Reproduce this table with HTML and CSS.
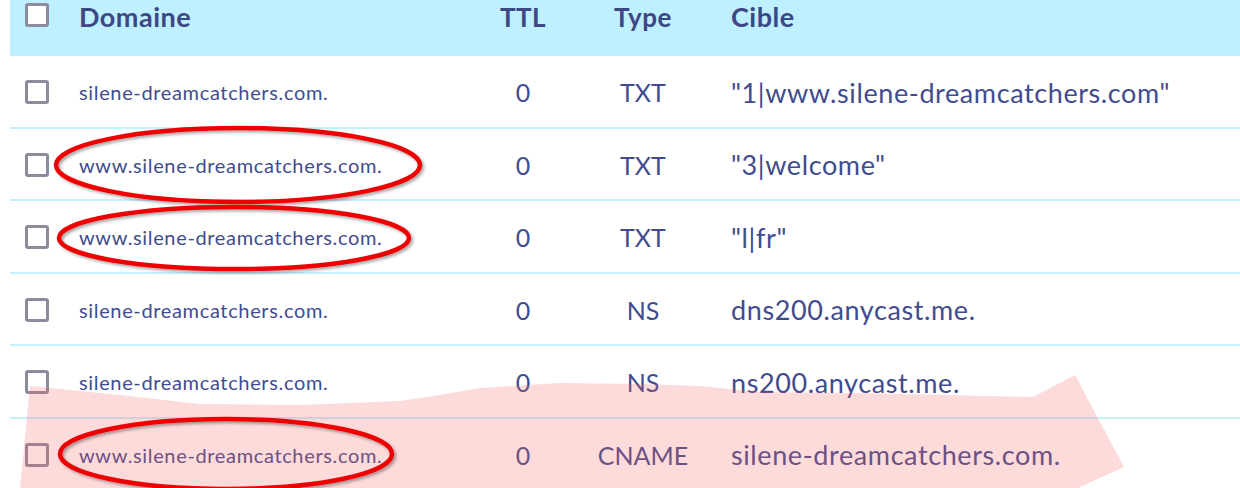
FILE: index.html
```html
<!DOCTYPE html>
<html lang="fr">
<head>
<meta charset="utf-8">
<title>Zone DNS</title>
<link rel="stylesheet" href="styles.css">
</head>
<body>
<div class="table">
  <div class="row head">
    <div class="cell check"><span class="box"></span></div>
    <div class="cell domain">Domaine</div>
    <div class="cell ttl">TTL</div>
    <div class="cell type">Type</div>
    <div class="cell target">Cible</div>
  </div>
  <div class="row">
    <div class="cell check"><span class="box"></span></div>
    <div class="cell domain">silene-dreamcatchers.com.</div>
    <div class="cell ttl">0</div>
    <div class="cell type">TXT</div>
    <div class="cell target">"1|www.silene-dreamcatchers.com"</div>
  </div>
  <div class="row">
    <div class="cell check"><span class="box"></span></div>
    <div class="cell domain">www.silene-dreamcatchers.com.</div>
    <div class="cell ttl">0</div>
    <div class="cell type">TXT</div>
    <div class="cell target">"3|welcome"</div>
  </div>
  <div class="row">
    <div class="cell check"><span class="box"></span></div>
    <div class="cell domain">www.silene-dreamcatchers.com.</div>
    <div class="cell ttl">0</div>
    <div class="cell type">TXT</div>
    <div class="cell target">"l|fr"</div>
  </div>
  <div class="row">
    <div class="cell check"><span class="box"></span></div>
    <div class="cell domain">silene-dreamcatchers.com.</div>
    <div class="cell ttl">0</div>
    <div class="cell type">NS</div>
    <div class="cell target">dns200.anycast.me.</div>
  </div>
  <div class="row">
    <div class="cell check"><span class="box"></span></div>
    <div class="cell domain">silene-dreamcatchers.com.</div>
    <div class="cell ttl">0</div>
    <div class="cell type">NS</div>
    <div class="cell target">ns200.anycast.me.</div>
  </div>
  <div class="row">
    <div class="cell check"><span class="box"></span></div>
    <div class="cell domain">www.silene-dreamcatchers.com.</div>
    <div class="cell ttl">0</div>
    <div class="cell type">CNAME</div>
    <div class="cell target">silene-dreamcatchers.com.</div>
  </div>
</div>
<svg class="annot" width="1240" height="488" viewBox="0 0 1240 488" xmlns="http://www.w3.org/2000/svg">
  <defs>
    <filter id="sh" x="-10%" y="-30%" width="120%" height="160%">
      <feDropShadow dx="2" dy="2" stdDeviation="1.5" flood-color="#000" flood-opacity="0.35"/>
    </filter>
  </defs>
  <polygon class="pink" points="30,386 120,395 200,404 300,405 400,401 440,395 480,388 560,383 640,384 700,386 760,392 860,393 1033,397 1075,375 1124,467 1078,488 20,488"/>
  <ellipse class="ring" cx="238" cy="165" rx="182" ry="37" filter="url(#sh)"/>
  <ellipse class="ring" cx="234" cy="238" rx="175" ry="31" filter="url(#sh)"/>
  <ellipse class="ring" cx="226" cy="454" rx="166" ry="35" filter="url(#sh)"/>
</svg>
</body>
</html>
```
FILE: styles.css
```css
html, body {
  margin: 0;
  padding: 0;
  background: #ffffff;
  width: 1240px;
  height: 488px;
  overflow: hidden;
}

body {
  font-family: "Lato", "Open Sans", sans-serif;
  color: #414c8f;
  position: relative;
}

.table {
  margin-left: 10px;
  width: 1240px;
}

.row {
  display: grid;
  grid-template-columns: 69px 404px 80px 160px 1fr;
  align-items: center;
  height: 72.5px;
  box-sizing: border-box;
  border-bottom: 2px solid #c6f0fd;
  padding-top: 2px;
}

.row.head {
  height: 56px;
  background: #bff0ff;
  border-bottom: none;
  align-items: start;
  padding-top: 3px;
}

.box {
  display: block;
  width: 24px;
  height: 24px;
  box-sizing: border-box;
  border: 3px solid #8c8b9d;
  border-radius: 3px;
  background: #fff;
  margin-left: 15px;
}

.domain {
  font-size: 20px;
  letter-spacing: 0.65px;
  white-space: nowrap;
}

.ttl, .type {
  text-align: center;
  font-size: 25px;
}

.target {
  font-size: 27px;
  letter-spacing: 0.6px;
  padding-left: 8px;
  white-space: nowrap;
}

.head .cell {
  font-weight: 700;
  font-size: 27px;
  letter-spacing: 0.5px;
  line-height: 30px;
  color: #3d4784;
  margin-top: -1px;
}

.head .ttl, .head .type {
  font-size: 26px;
}

.head .check {
  margin-top: 0;
}

.annot {
  position: absolute;
  left: 0;
  top: 0;
  pointer-events: none;
}

.pink {
  fill: rgb(250, 100, 100);
  fill-opacity: 0.23;
}

.ring {
  fill: none;
  stroke: #ee0000;
  stroke-width: 4.5;
}
```
